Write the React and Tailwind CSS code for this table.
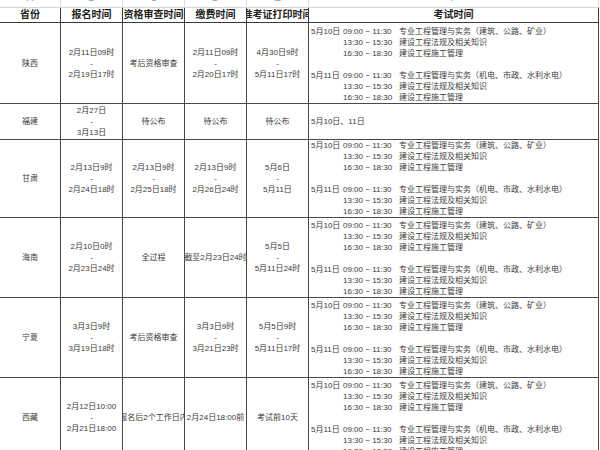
import React from "react";

const FONT = { fontFamily: '"Liberation Sans", "Noto Sans CJK SC", sans-serif' };

const examLines = [
  ["5月10日", "09:00 ~ 11:30", "专业工程管理与实务（建筑、公路、矿业）"],
  ["", "13:30 ~ 15:30", "建设工程法规及相关知识"],
  ["", "16:30 ~ 18:30", "建设工程施工管理"],
  ["", "", ""],
  ["5月11日", "09:00 ~ 11:30", "专业工程管理与实务（机电、市政、水利水电）"],
  ["", "13:30 ~ 15:30", "建设工程法规及相关知识"],
  ["", "16:30 ~ 18:30", "建设工程施工管理"],
];

const rows = [
  {
    h: "h-[81px]",
    p: "陕西",
    b: ["2月11日09时", "-", "2月19日17时"],
    c: ["考后资格审查"],
    d: ["2月11日09时", "-", "2月20日17时"],
    e: ["4月30日9时", "-", "5月11日17时"],
  },
  {
    h: "h-[36px]",
    p: "福建",
    b: ["2月27日", "-", "3月13日"],
    c: ["待公布"],
    d: ["待公布"],
    e: ["待公布"],
    f: "5月10日、11日",
  },
  {
    h: "h-[78px]",
    p: "甘肃",
    b: ["2月13日9时", "-", "2月24日18时"],
    c: ["2月13日9时", "-", "2月25日18时"],
    d: ["2月13日9时", "-", "2月26日24时"],
    e: ["5月6日", "-", "5月11日"],
  },
  {
    h: "h-[80px]",
    p: "海南",
    b: ["2月10日0时", "-", "2月23日24时"],
    c: ["全过程"],
    d: ["截至2月23日24时"],
    e: ["5月5日", "-", "5月11日24时"],
  },
  {
    h: "h-[80px]",
    p: "宁夏",
    b: ["3月3日9时", "-", "3月19日18时"],
    c: ["考后资格审查"],
    d: ["3月3日9时", "-", "3月21日23时"],
    e: ["5月5日9时", "-", "5月11日17时"],
  },
  {
    h: "h-[80px]",
    p: "西藏",
    b: ["2月12日10:00", "-", "2月21日18:00"],
    c: ["报名后2个工作日内"],
    d: ["2月24日18:00前"],
    e: ["考试前10天"],
  },
];

const GRID = "grid grid-cols-[61px_62px_62px_62px_62px_290px]";

function Center({ lines }) {
  return (
    <div className="flex items-center justify-center overflow-hidden border-r border-b border-[#4a4a4a]">
      <div className="flex flex-col items-center whitespace-nowrap text-[8px] leading-[11px] text-[#3a3a3a]">
        {lines.map((l, i) => (
          <span key={i}>{l}</span>
        ))}
      </div>
    </div>
  );
}

function Exam() {
  return (
    <div className="flex flex-col justify-end overflow-hidden border-r border-b border-[#4a4a4a] pl-[2px]">
      {examLines.map((l, i) => (
        <div
          key={i}
          className="grid grid-cols-[32px_56px_1fr] h-[11px] whitespace-nowrap text-[8px] leading-[11px] text-[#3a3a3a]"
        >
          <span>{l[0]}</span>
          <span>{l[1]}</span>
          <span>{l[2]}</span>
        </div>
      ))}
    </div>
  );
}

export default function App() {
  const letters = ["A", "B", "C", "D", "E", "F"];
  const heads = ["省份", "报名时间", "资格审查时间", "缴费时间", "准考证打印时间", "考试时间"];
  return (
    <div className="w-[600px] h-[450px] overflow-hidden bg-white" style={FONT}>
      <div className={`${GRID} h-[8px] overflow-hidden border-b border-[#d4d4d4]`}>
        {letters.map((l) => (
          <div
            key={l}
            className="flex justify-center overflow-hidden border-r border-[#dcdcdc] text-[10px] leading-[10px] text-[#9a9a9a]"
          >
            <span className="-mt-[7px]">{l}</span>
          </div>
        ))}
      </div>
      <div className={`${GRID} h-[15px]`}>
        {heads.map((t) => (
          <div
            key={t}
            className="flex items-center justify-center overflow-hidden whitespace-nowrap border-r border-b border-[#3a3a3a] text-[10px] font-bold leading-[14px] text-[#222]"
          >
            <span>{t}</span>
          </div>
        ))}
      </div>
      {rows.map((r) => (
        <div key={r.p} className={`${GRID} ${r.h}`}>
          <Center lines={[r.p]} />
          <Center lines={r.b} />
          <Center lines={r.c} />
          <Center lines={r.d} />
          <Center lines={r.e} />
          {r.f ? (
            <div className="flex items-center border-r border-b border-[#4a4a4a] pl-[2px] text-[8px] leading-[11px] text-[#3a3a3a]">
              {r.f}
            </div>
          ) : (
            <Exam />
          )}
        </div>
      ))}
    </div>
  );
}
